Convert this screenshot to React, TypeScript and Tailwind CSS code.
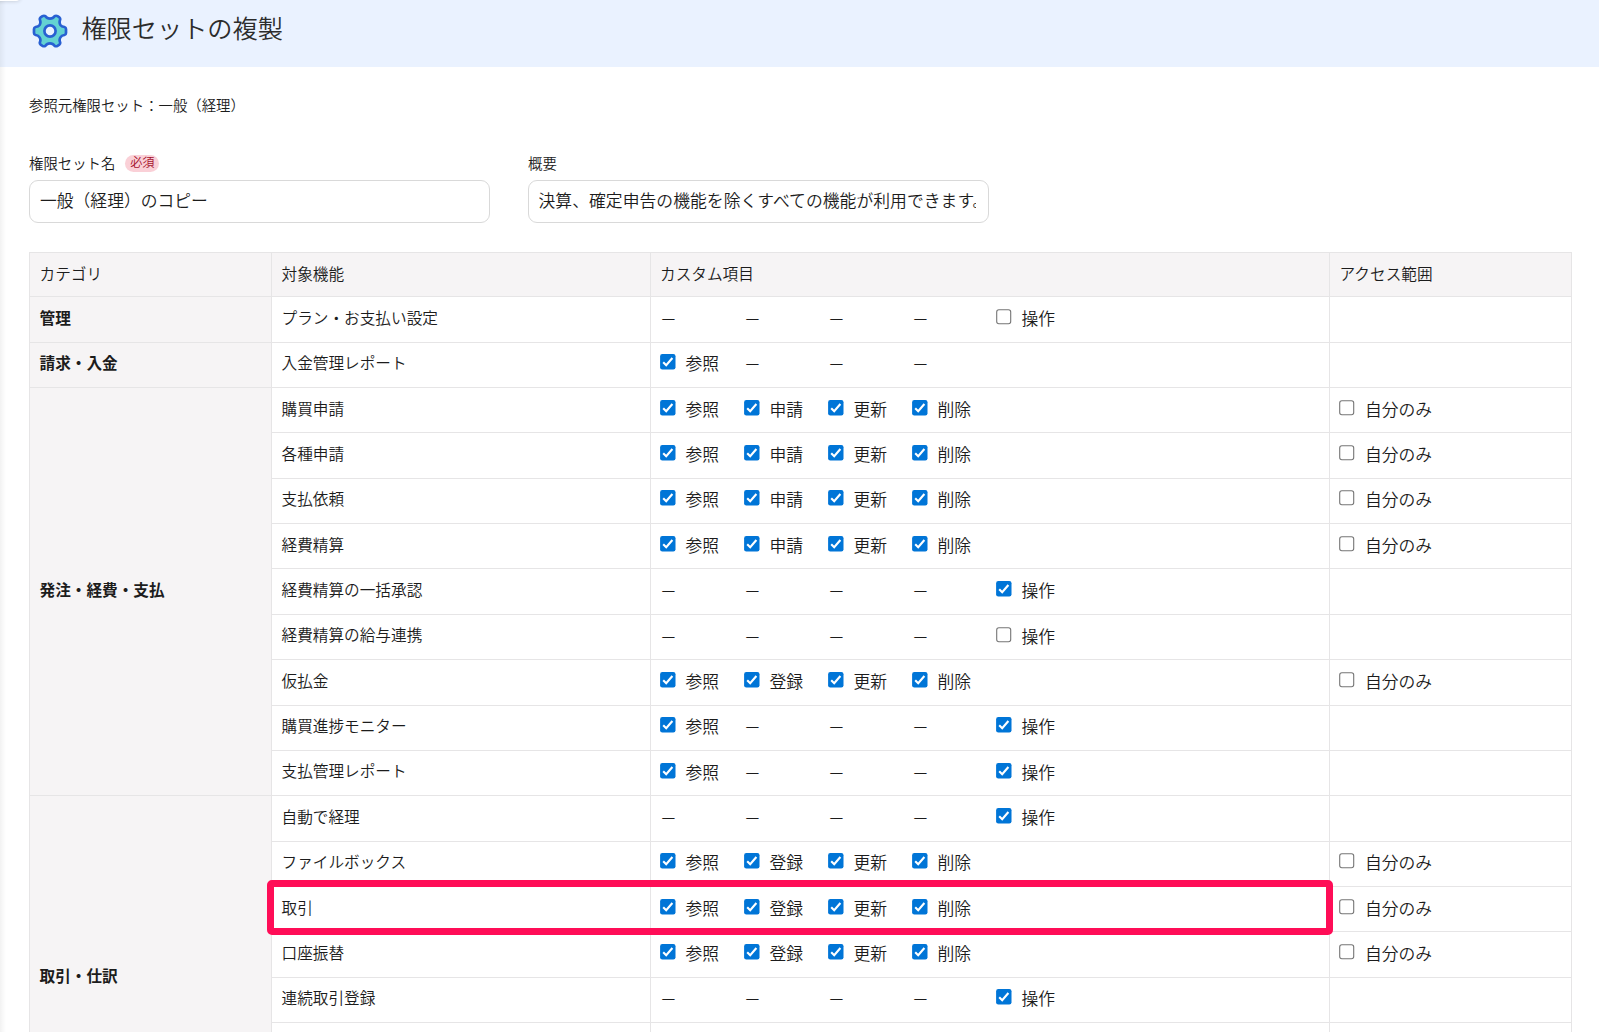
import React, { useState } from "react";

type Item = { label: string; checked: boolean } | null;

interface Feature {
  name: string;
  items: Item[];
  selfOnly?: boolean;
}

interface Category {
  name: string;
  features: Feature[];
}

const on = (label: string): Item => ({ label, checked: true });
const off = (label: string): Item => ({ label, checked: false });

const none: Item[] = [null, null, null, null];
const request = [on("参照"), on("申請"), on("更新"), on("削除")];
const register = [on("参照"), on("登録"), on("更新"), on("削除")];

const categories: Category[] = [
  {
    name: "管理",
    features: [{ name: "プラン・お支払い設定", items: [...none, off("操作")] }],
  },
  {
    name: "請求・入金",
    features: [{ name: "入金管理レポート", items: [on("参照"), null, null, null] }],
  },
  {
    name: "発注・経費・支払",
    features: [
      { name: "購買申請", items: request, selfOnly: true },
      { name: "各種申請", items: request, selfOnly: true },
      { name: "支払依頼", items: request, selfOnly: true },
      { name: "経費精算", items: request, selfOnly: true },
      { name: "経費精算の一括承認", items: [...none, on("操作")] },
      { name: "経費精算の給与連携", items: [...none, off("操作")] },
      { name: "仮払金", items: register, selfOnly: true },
      { name: "購買進捗モニター", items: [on("参照"), null, null, null, on("操作")] },
      { name: "支払管理レポート", items: [on("参照"), null, null, null, on("操作")] },
    ],
  },
  {
    name: "取引・仕訳",
    features: [
      { name: "自動で経理", items: [...none, on("操作")] },
      { name: "ファイルボックス", items: register, selfOnly: true },
      { name: "取引", items: register, selfOnly: true },
      { name: "口座振替", items: register, selfOnly: true },
      { name: "連続取引登録", items: [...none, on("操作")] },
      { name: "", items: [] },
      { name: "", items: [] },
      { name: "", items: [] },
    ],
  },
];

function GearIcon() {
  return (
    <svg width="36" height="34" viewBox="0 0 36 34" className="shrink-0">
      <path
        d="M10.5 2.2Q12 1.3 13.4 2.2Q15 4.6 18 4.6Q21 4.6 22.6 2.2Q24 1.3 25.5 2.2L27.4 3.4Q28.6 4.5 28 6Q27 9 28.4 11Q29.6 12.6 32.4 13Q34 13.4 34 15V19Q34 20.6 32.4 21Q29.6 21.4 28.4 23.4Q27 25.6 28 28Q28.6 29.5 27.4 30.6L25.5 31.8Q24 32.7 22.6 31.8Q21 29.4 18 29.4Q15 29.4 13.4 31.8Q12 32.7 10.5 31.8L8.6 30.6Q7.4 29.5 8 28Q9 25.6 7.6 23.4Q6.4 21.4 3.6 21Q2 20.6 2 19V15Q2 13.4 3.6 13Q6.4 12.6 7.6 11Q9 9 8 6Q7.4 4.5 8.6 3.4Z"
        fill="#64d2d2"
        stroke="#2860d2"
        strokeWidth="2.7"
        strokeLinejoin="round"
      />
      <circle cx="18" cy="17" r="5.6" fill="#eaf2ff" stroke="#2860d2" strokeWidth="2.7" />
    </svg>
  );
}

function CheckItem({ label, checked }: { label: string; checked: boolean }) {
  const [value, setValue] = useState(checked);

  return (
    <label className="flex items-start text-[16.8px] leading-[24px]">
      <svg width="16" height="16" viewBox="0 0 16 16" className="mt-[2px] mr-[9.5px] shrink-0" onClick={() => setValue(!value)}>
        {value ? (
          <>
            <rect x="0.1" y="0.1" width="15.4" height="15.4" rx="2.2" fill="#0075d7" />
            <path d="M3.2 8.3L6.2 11.3L12.4 4" fill="none" stroke="#fff" strokeWidth="2.1" />
          </>
        ) : (
          <rect x="0.7" y="0.7" width="14" height="14" rx="2.2" fill="#fff" stroke="#767676" strokeWidth="1.1" />
        )}
      </svg>
      <span className="-mt-px whitespace-nowrap">{label}</span>
    </label>
  );
}

function FeatureRow({ feature }: { feature: Feature }) {
  const { name, items, selfOnly } = feature;

  return (
    <div className="relative flex h-[45.36px]">
      <div className="w-[379px] border-r border-b border-[#e6e5e6] pt-[8.6px] pl-[9.5px] leading-[24px]">{name}</div>
      <div className="flex w-[679px] border-r border-b border-[#e6e5e6] pt-[9.7px] pl-[9px]">
        {items.map((item, i) => (
          <div key={i} className="w-[84px]">
            {item ? <CheckItem {...item} /> : <span className="block text-[16.8px] leading-[24px]">－</span>}
          </div>
        ))}
      </div>
      <div className="w-[242px] border-r border-b border-[#e6e5e6] pt-[9.7px] pl-[9.4px]">
        {selfOnly && <CheckItem label="自分のみ" checked={false} />}
      </div>
      {/* Highlight frame around the feature being explained */}
      {name === "取引" && (
        <div className="absolute -top-[7px] -left-[5px] z-10 h-[55px] w-[1066px] rounded-[5px] border-[7px] border-[#ff0d57]"></div>
      )}
    </div>
  );
}

export default function App() {
  const [title, setTitle] = useState("一般（経理）のコピー");
  const [summary, setSummary] = useState("決算、確定申告の機能を除くすべての機能が利用できます。");

  return (
    <div className="relative h-[1032px] w-[1599px] overflow-hidden bg-white font-['Noto_Sans_CJK_JP',sans-serif] text-[15.65px] font-[350] text-[#1c1c1c]">
      <header className="flex h-[67px] items-start bg-[#eaf2ff] pt-[14px] pl-[32.4px]">
        <GearIcon />
        <h1 className="-mt-[4.5px] ml-[13px] text-[25.2px] leading-[34px] text-[#2c2c2c]">権限セットの複製</h1>
      </header>

      <main className="pt-[27px] pl-[29px]">
        <p className="text-[14.4px] leading-[22px]">参照元権限セット：一般（経理）</p>

        <div className="mt-[36px] flex gap-[38px]">
          <div className="w-[461px]">
            <div className="flex h-[28px] items-start">
              <span className="text-[14.4px] leading-[22px]">権限セット名</span>
              <span className="mt-[3px] ml-[10px] h-[17px] w-[34px] rounded-full bg-[#fad0d7] text-center text-[12.2px] leading-[15px] text-[#a5102d]">必須</span>
            </div>
            <input
              value={title}
              onChange={(e) => setTitle(e.target.value)}
              className="h-[43px] w-full rounded-[9px] border border-[#d9d9d9] px-[10px] pb-[4px] text-[16.8px] outline-none"
            />
          </div>
          <div className="w-[461px]">
            <div className="h-[28px] text-[14.4px] leading-[22px]">概要</div>
            <input
              value={summary}
              onChange={(e) => setSummary(e.target.value)}
              className="h-[43px] w-full rounded-[9px] border border-[#d9d9d9] pr-[12px] pb-[4px] pl-[9.5px] text-[16.8px] tracking-[0.05px] outline-none"
            />
          </div>
        </div>

        <section className="mt-[29px] w-[1543px] border-t border-l border-[#e6e5e6]">
          <div className="flex h-[44.3px] bg-[#f6f4f5] leading-[24px]">
            <div className="w-[242px] border-r border-b border-[#e6e5e6] pt-[8.6px] pl-[9.5px]">カテゴリ</div>
            <div className="w-[379px] border-r border-b border-[#e6e5e6] pt-[8.6px] pl-[9.5px]">対象機能</div>
            <div className="w-[679px] border-r border-b border-[#e6e5e6] pt-[8.6px] pl-[9px]">カスタム項目</div>
            <div className="w-[242px] border-r border-b border-[#e6e5e6] pt-[8.6px] pl-[9.5px]">アクセス範囲</div>
          </div>
          {categories.map((category) => (
            <div key={category.name} className="flex">
              <div className="flex w-[242px] items-center border-r border-b border-[#e6e5e6] bg-[#f6f4f5] pb-[3px] pl-[9.5px] leading-[24px] font-bold">
                {category.name}
              </div>
              <div>
                {category.features.map((feature, i) => (
                  <FeatureRow key={i} feature={feature} />
                ))}
              </div>
            </div>
          ))}
        </section>
      </main>

      {/* Shadow cast by the side menu and its corner tab */}
      <div className="absolute top-0 left-0 h-full w-[6px] bg-linear-to-r from-black/5 to-transparent"></div>
      <div className="absolute -top-[10px] -left-[10px] h-[11px] w-[30px] rounded-[4px] bg-white shadow-[0_0_4px_rgba(0,0,0,0.2)]"></div>
    </div>
  );
}
